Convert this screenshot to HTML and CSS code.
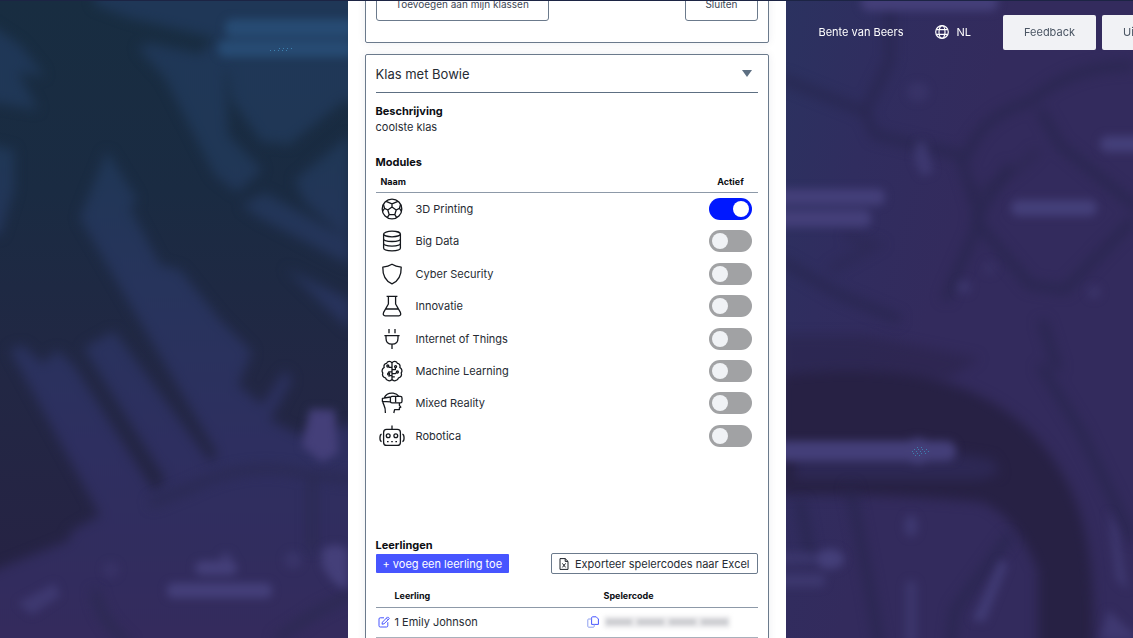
FILE: index.html
```html
<!DOCTYPE html>
<html lang="nl">
<head>
<meta charset="utf-8">
<meta name="viewport" content="width=device-width, initial-scale=1">
<title>Klassen</title>
<link rel="stylesheet" href="styles.css">
</head>
<body>
<svg class="backdrop" viewBox="0 0 1133 638" preserveAspectRatio="xMidYMid slice" aria-hidden="true">
  <defs>
    <linearGradient id="water" x1="0" y1="0" x2="0" y2="638" gradientUnits="userSpaceOnUse">
      <stop offset="0" stop-color="#182d41"/><stop offset=".3" stop-color="#1a2b42"/><stop offset=".6" stop-color="#222744"/><stop offset="1" stop-color="#272144"/>
    </linearGradient>
    <linearGradient id="land" x1="0" y1="0" x2="0" y2="638" gradientUnits="userSpaceOnUse">
      <stop offset="0" stop-color="#1f3757"/><stop offset=".25" stop-color="#203756"/><stop offset=".45" stop-color="#27345c"/><stop offset=".7" stop-color="#2e2f60"/><stop offset="1" stop-color="#342b5d"/>
    </linearGradient>
    <linearGradient id="east" x1="786" y1="0" x2="1000" y2="60" gradientUnits="userSpaceOnUse">
      <stop offset="0" stop-color="#2b3260"/><stop offset=".5" stop-color="#302d5f"/><stop offset="1" stop-color="#332b5d"/>
    </linearGradient>
    <filter id="b3" x="-30%" y="-60%" width="160%" height="220%" color-interpolation-filters="sRGB"><feGaussianBlur stdDeviation="4"/></filter>
    <filter id="b5" x="-20%" y="-20%" width="140%" height="140%" color-interpolation-filters="sRGB"><feGaussianBlur stdDeviation="6"/></filter>
  </defs>
  <rect width="567" height="638" fill="url(#water)"/>
  <rect x="567" width="566" height="638" fill="url(#east)"/>
  <g filter="url(#b5)" fill="url(#land)">
    <path d="M92-20H380V110L345 100L287 146L270 135L232 62L225 70L228 135L262 170L237 192L215 175L165 78L138 48L150 43L200 54L216 38L130 18L95 5Z"/>
    <path d="M225 58L350 58L350 80L286 143L262 142L232 100Z"/>
    <path d="M-20 18L20 45L45 76L18 72L38 110L-20 100Z"/>
    <path d="M-20 142L14 150L14 190L0 235L-20 235Z"/>
    <path d="M107 151L137 200L130 208L160 265L180 270L220 320L252 352L238 385L262 405L285 370L292 380L270 420L300 435L370 420V680H-30V580L70 540L70 532L100 515L10 350L22 345L43 364L57 350L74 366L154 492L166 480L84 348L114 331L210 462L218 455L80 218Z"/>
    <path d="M242 205L265 193L350 240V265L260 218Z"/>
    <path d="M295 180L350 135V240L305 202Z"/>
    <path d="M285 268L350 300V330Z"/>
  </g>
  <g filter="url(#b5)" fill="none" stroke="#29294f" stroke-width="8">
    <path d="M150 504L190 488Q250 458 308 475L360 480M312 480V550M95 590Q100 622 130 645M275 640L320 610L360 590" stroke-opacity=".8"/>
  </g>
  <g filter="url(#b3)" fill="#274b73">
    <rect x="225" y="19" width="130" height="18" rx="8"/><rect x="218" y="40" width="136" height="17" rx="8"/>
  </g>
  <g filter="url(#b3)" fill="#443f79">
    <path d="M310 409L335 410L338 453L322 462L302 446Z"/>
    <rect x="195" y="561" width="42" height="14" rx="7"/><rect x="167" y="583" width="105" height="15" rx="6"/>
    <path d="M322 550Q335 540 348 550V588Q335 590 322 565Z"/>
    <circle cx="226" cy="558" r="6" opacity=".6"/><circle cx="293" cy="560" r="9" opacity=".4"/><circle cx="111" cy="570" r="8" opacity=".3"/>
    <path d="M18 603L55 583L60 596L32 615Z" opacity=".65"/>
  </g>
  <g filter="url(#b5)" fill="#272144">
    <path d="M780 376Q860 365 925 378Q1015 395 1060 470Q1100 530 1092 660H1038V570Q1015 515 982 502Q880 493 780 495Z"/>
    <path d="M780 335L865 335L980 358L950 378L780 380Z" opacity=".45"/>
  </g>
  <path d="M795 448H920L992 459L1000 473L980 480H795Z" fill="#2d2854" filter="url(#b5)"/>
  <g filter="url(#b5)" fill="none" stroke="#27254b" stroke-width="9">
    <path d="M780 78L865 112L890 60V0M865 112L875 135L960 155L980 220L945 300M966 158Q980 115 1030 102Q1070 65 1133 66M1040 110L1060 145L1140 210M1010 165L975 220L1030 285L1065 290L1133 220M780 260L840 295L900 320M1040 365L1080 430L1133 540M850 485L870 590L880 650M1010 535L955 610L950 650M800 500L810 555M1042 320L1058 370" stroke-opacity=".7"/>
    <path d="M970 195Q1010 180 1038 150M845 235L875 245L830 270" stroke-opacity=".4"/>
  </g>
  <g filter="url(#b3)" fill="#443f79">
    <rect x="861" y="-6" width="137" height="17" rx="8"/>
    <rect x="775" y="189" width="110" height="16" rx="7"/><rect x="775" y="210" width="96" height="17" rx="7"/>
    <rect x="1011" y="200" width="86" height="16" rx="8"/><rect x="1100" y="136" width="60" height="16" rx="8"/>
    <rect x="775" y="441" width="181" height="20" rx="9"/><ellipse cx="918" cy="451" rx="14" ry="13"/>
    <ellipse cx="830" cy="559" rx="14" ry="10"/><rect x="775" y="552" width="40" height="12" rx="5" opacity=".5"/><rect x="775" y="574" width="50" height="13" rx="5" opacity=".6"/>
    <path d="M916 142L926 142L933 172L922 176L914 160Z" opacity=".65"/>
    <ellipse cx="918" cy="92" rx="11" ry="10" opacity=".35"/>
    <ellipse cx="911" cy="526" rx="7" ry="11" opacity=".65"/><rect x="905" y="580" width="12" height="65" rx="6" opacity=".5"/>
    <path d="M1000 560L1008 564L985 622L972 620Z" opacity=".8"/>
    <circle cx="964" cy="287" r="7" opacity=".5"/><circle cx="1094" cy="292" r="7" opacity=".4"/><circle cx="990" cy="268" r="7" opacity=".25"/>
    <path d="M1108 510L1118 530L1128 590L1116 580Z" opacity=".6"/><path d="M1108 610L1140 640H1100Z" opacity=".7"/>
  </g>
  <g fill="none" stroke="#3c80ae" stroke-width="1" stroke-dasharray="1 3">
    <path d="M917 447.500H924M914 449.500H929M912 451.500H930M913 453.500H927M915 455.500H922M279 48.500H294M270 50.500H288"/>
  </g>
</svg>

<div class="page">
  <main class="panel">
    <section class="card card-previous">
      <div class="actions">
        <button class="btn" type="button">Toevoegen aan mijn klassen</button>
        <button class="btn" type="button">Sluiten</button>
      </div>
    </section>

    <section class="card card-open">
      <button class="card-head" type="button" aria-expanded="true">
        <span>Klas met Bowie</span>
        <svg class="caret" viewBox="0 0 10 7" aria-hidden="true"><path d="M0 0H10L5 7Z"/></svg>
      </button>

      <h3 class="label">Beschrijving</h3>
      <p class="description">coolste klas</p>

      <h3 class="label">Modules</h3>
      <table class="modules">
        <colgroup><col class="col-icon"><col><col class="col-toggle"></colgroup>
        <thead><tr><th colspan="2" class="name-head">Naam</th><th class="toggle-cell">Actief</th></tr></thead>
        <tbody>
          <tr>
            <td><svg class="icon" viewBox="0 0 22 22" aria-hidden="true"><circle cx="11" cy="11" r="9.8"/><path d="M5 3.4L11 5.8L17 3.4M11 5.8V9M11 9L15.2 12L13.8 16.6H8.2L6.8 12ZM6.8 12L3.6 10.4L2.4 6.2M3.6 10.4L1.4 13.4M15.2 12L18.4 10.4L19.6 6.2M18.4 10.4L20.6 13.4M8.2 16.6L6.4 19.4M13.8 16.6L15.6 19.4"/></svg></td>
            <td><label for="m1">3D Printing</label></td>
            <td><input class="toggle" id="m1" type="checkbox" checked></td>
          </tr>
          <tr>
            <td><svg class="icon" viewBox="0 0 22 22" aria-hidden="true"><ellipse cx="11" cy="4" rx="8.4" ry="2.8"/><path d="M2.6 4V18C2.6 19.6 6.4 20.8 11 20.8S19.4 19.6 19.4 18V4M2.6 8.7C2.6 10.3 6.4 11.5 11 11.5S19.4 10.3 19.4 8.7M2.6 13.3C2.6 14.9 6.4 16.1 11 16.1S19.4 14.9 19.4 13.3"/></svg></td>
            <td><label for="m2">Big Data</label></td>
            <td><input class="toggle" id="m2" type="checkbox"></td>
          </tr>
          <tr>
            <td><svg class="icon" viewBox="0 0 22 22" aria-hidden="true"><path d="M11 1.2C8.2 3 5.2 3.8 1.8 4.2C1.6 11.6 4 17.8 11 20.8C18 17.8 20.4 11.6 20.2 4.2C16.8 3.8 13.8 3 11 1.2Z"/></svg></td>
            <td><label for="m3">Cyber Security</label></td>
            <td><input class="toggle" id="m3" type="checkbox"></td>
          </tr>
          <tr>
            <td><svg class="icon" viewBox="0 0 22 22" aria-hidden="true"><path d="M5.6 1.4H16.4M7.4 1.4V9L2.6 17.4C1.8 19.4 2.4 20.8 4.2 20.8H17.8C19.6 20.8 20.2 19.4 19.4 17.4L14.6 9V1.4M4.6 14H17.4"/></svg></td>
            <td><label for="m4">Innovatie</label></td>
            <td><input class="toggle" id="m4" type="checkbox"></td>
          </tr>
          <tr>
            <td><svg class="icon" viewBox="0 0 22 22" aria-hidden="true"><path d="M8 1V5.2M14 1V5.2M3.4 7.6H18.6M5 7.6V10.2C5 14 7.4 16.2 11 16.2S17 14 17 10.2V7.6M11 16.2V21"/></svg></td>
            <td><label for="m5">Internet of Things</label></td>
            <td><input class="toggle" id="m5" type="checkbox"></td>
          </tr>
          <tr>
            <td><svg class="icon" viewBox="0 0 22 22" aria-hidden="true"><path d="M11 3C9.8.8 6.2.8 5.6 3.4C3.4 3.6 2.4 5.8 3.2 7.4C.8 8.8.6 11.6 1.8 13C.8 15.4 2.2 17.4 4.4 17.8C5.4 21.2 9.6 21.6 11 19.4C12.4 21.6 16.6 21.2 17.6 17.8C19.8 17.4 21.2 15.4 20.2 13C21.4 11.6 21.2 8.8 18.8 7.4C19.6 5.8 18.6 3.6 16.4 3.4C15.8.8 12.2.8 11 3ZM11 3V19.4M11 7.4H8.4L7.4 6.4M11 11.8H7.8V13.2M11 15.6H8.6L7.6 16.6M11 9.6H14.4V7.6M11 13.6H14.4L15.6 12.4M11 16.8H13.8"/><circle cx="6.8" cy="6" r="1"/><circle cx="7.6" cy="14" r="1"/><circle cx="14.6" cy="6.6" r="1"/><circle cx="16.4" cy="12" r="1"/></svg></td>
            <td><label for="m6">Machine Learning</label></td>
            <td><input class="toggle" id="m6" type="checkbox"></td>
          </tr>
          <tr>
            <td><svg class="icon" viewBox="0 0 22 22" aria-hidden="true"><rect x="9.4" y="4.4" width="11.6" height="6.4" rx="1.6"/><path d="M14.6 4.6V10.6M9.4 5L1.4 6.4V9.4L9.4 9.8M3.2 5.8C5.2 1.8 9 .8 12.2 1.2C15 1.6 16.8 2.8 17.8 4.4M1.8 9.6C2 12.8 4.8 13.6 4.4 21M18.4 11V13.4L19.8 15.2L18.4 15.8V17.6H13.6L12.8 21"/></svg></td>
            <td><label for="m7">Mixed Reality</label></td>
            <td><input class="toggle" id="m7" type="checkbox"></td>
          </tr>
          <tr>
            <td><svg class="icon icon-robot" viewBox="0 0 26 22" aria-hidden="true"><rect x="4.6" y="4.4" width="16.8" height="16" rx="3"/><path d="M13 4.4V.6M2.6 9.2C.4 9.8.4 16 2.6 16.6M23.4 9.2C25.6 9.8 25.6 16 23.4 16.6M8 16.6H9.6M12.2 16.6H13.8M16.4 16.6H18"/><circle cx="9.2" cy="10.8" r="1.9"/><circle cx="16.8" cy="10.8" r="1.9"/></svg></td>
            <td><label for="m8">Robotica</label></td>
            <td><input class="toggle" id="m8" type="checkbox"></td>
          </tr>
        </tbody>
      </table>

      <h3 class="label">Leerlingen</h3>
      <div class="toolbar">
        <button class="btn-add" type="button">+ voeg een leerling toe</button>
        <button class="btn-export" type="button">
          <svg class="file" viewBox="0 0 10 12" aria-hidden="true"><path d="M1 .6H6.2L9 3.4V11.4H1ZM6.2 .6V3.4H9M3.4 5.4L6.6 9.4M6.6 5.4L3.4 9.4"/></svg>
          Exporteer spelercodes naar Excel
        </button>
      </div>
      <table class="students">
        <colgroup><col class="col-action"><col class="col-student"><col class="col-action"><col></colgroup>
        <thead><tr><th></th><th>Leerling</th><th></th><th>Spelercode</th></tr></thead>
        <tbody><tr>
          <td><button class="icon-btn" type="button" aria-label="Bewerken"><svg viewBox="0 0 12 12" aria-hidden="true"><path d="M6 1.8H2.2Q1 1.8 1 3V9.8Q1 11 2.2 11H8.6Q9.8 11 9.8 9.8V6.2M4 8.2L4.4 6.2L9.6 .9L11.3 2.6L6 7.8ZM8.4 2.2L10 3.8"/></svg></button></td>
          <td>1 Emily Johnson</td>
          <td><button class="icon-btn" type="button" aria-label="Kopiëren"><svg viewBox="0 0 12 12" aria-hidden="true"><path d="M5.6 .8H9.2L11.4 3V8.4H4.6V1.8Q4.6 .8 5.6 .8Z"/><path class="faint" d="M4.6 3H1.6Q.8 3 .8 3.8V10.4Q.8 11.2 1.6 11.2H6.4Q7.2 11.2 7.2 10.4V8.4"/></svg></button></td>
          <td><div class="code"><span></span><span></span><span></span><span></span></div></td>
        </tr></tbody>
      </table>
    </section>
  </main>

  <header class="topbar">
    <span class="user">Bente van Beers</span>
    <button class="language" type="button">
      <svg class="globe" viewBox="0 0 14 14" aria-hidden="true"><circle cx="7" cy="7" r="6.3"/><ellipse cx="7" cy="7" rx="3" ry="6.3"/><path d="M1.4 4.6H12.6M1.4 9.4H12.6"/></svg>
      NL
    </button>
    <button class="top-btn" type="button">Feedback</button>
    <button class="top-btn" type="button">Uitloggen</button>
  </header>
</div>
</body>
</html>
```
FILE: styles.css
```css
* {
  box-sizing: border-box;
}

body {
  margin: 0;
  height: 100vh;
  overflow: hidden;
  background: #272144;
  color: #262b33;
  font: 11px/16px Inter, "Liberation Sans", sans-serif;
}

button {
  font: inherit;
  color: inherit;
  cursor: pointer;
}

.backdrop {
  position: fixed;
  inset: 0;
  width: 100%;
  height: 100%;
}

.page {
  position: relative;
  display: grid;
  grid-template-columns: 1fr 438px 1fr;
  height: 100%;
  border-top: 1px solid #1c2444;
}

.panel {
  grid-column: 2;
  display: flex;
  flex-direction: column;
  gap: 11px;
  padding: 0 17px;
  overflow: hidden;
  background: #fff;
}

.card {
  flex: none;
  padding: 0 10px;
  border: 1px solid #6b7a8c;
  border-radius: 2px;
  box-shadow: 0 0 8px rgba(30, 40, 80, 0.08);
}

/* The list is scrolled: only the foot of this card is in view. */
.card-previous {
  margin-top: -35px;
  padding-top: 20px;
  padding-bottom: 21px;
}

.card-open {
  min-height: 640px;
}

.actions,
.toolbar {
  display: flex;
  justify-content: space-between;
  align-items: center;
}

.btn {
  height: 34px;
  padding: 0 19px;
  border: 1px solid #6b7a8c;
  border-radius: 3px;
  background: #fff;
  color: #3d4756;
  font-size: 10px;
}

.card-head {
  display: flex;
  align-items: center;
  justify-content: space-between;
  width: 100%;
  height: 38px;
  margin-bottom: 10px;
  padding: 0 6px 0 0;
  border: 0;
  border-bottom: 1px solid #5d6f82;
  background: none;
  font-size: 13px;
}

.caret {
  width: 10px;
  height: 7px;
  fill: #5d6f82;
}

.label {
  margin: 0;
  font-size: 11px;
  font-weight: 700;
  color: #0b0d12;
}

.description {
  margin: 0 0 19px;
}

table {
  width: 100%;
  border-collapse: collapse;
  table-layout: fixed;
}

th,
td {
  padding: 0;
  text-align: left;
  vertical-align: middle;
}

th {
  font-size: 9px;
  font-weight: 700;
  color: #0b0d12;
}

thead tr {
  height: 22px;
  border-bottom: 1px solid #8d99a8;
}

.modules {
  height: 282px;
  margin-bottom: 85px;
}

.modules th {
  padding-top: 2px;
}

.modules .name-head {
  padding-left: 5px;
}

.modules .toggle-cell {
  text-align: center;
}

.col-icon {
  width: 32px;
}

.col-toggle {
  width: 54px;
}

.modules label {
  padding-left: 8px;
}

.icon {
  display: block;
  width: 22px;
  height: 22px;
  margin: 0 auto;
  overflow: visible;
  fill: none;
  stroke: #14171c;
  stroke-width: 1.3;
  stroke-linejoin: round;
}

.icon-robot {
  width: 26px;
}

.toggle {
  appearance: none;
  display: block;
  width: 43px;
  height: 22px;
  margin: 0 auto;
  padding: 3px;
  border-radius: 11px;
  background: #a1a2a4;
}

.toggle::before {
  content: "";
  display: block;
  width: 16px;
  height: 16px;
  border-radius: 50%;
  background: #f0f2f5;
}

.toggle:checked {
  background: #0018ff;
}

.toggle:checked::before {
  margin-left: auto;
  background: #fff;
}

.btn-add {
  height: 19px;
  padding: 0 7px;
  border: 0;
  border-radius: 1px;
  background: #4755ff;
  color: #fff;
}

.btn-export {
  display: flex;
  align-items: center;
  gap: 6px;
  height: 21px;
  padding: 0 7px;
  border: 1px solid #6b7a8c;
  border-radius: 2px;
  background: #fff;
}

.file {
  width: 10px;
  height: 12px;
  fill: none;
  stroke: #1d2229;
}

.students thead tr {
  height: 33px;
}

.students thead th {
  padding-top: 11px;
}

.students tbody tr {
  height: 30px;
  border-bottom: 1px solid #a8b0bb;
}

.col-action {
  width: 19px;
}

.col-student {
  width: 190px;
}

.icon-btn {
  display: block;
  width: 16px;
  padding: 0 2px;
  border: 0;
  background: none;
}

.icon-btn svg {
  display: block;
  width: 12px;
  height: 12px;
  fill: none;
  stroke: #4755ff;
}

.icon-btn .faint {
  stroke: #8fa0f0;
}

.code {
  display: flex;
  gap: 5px;
  width: 126px;
  height: 12px;
  padding: 3px 2px;
  background: #ececee;
  filter: blur(2px);
}

.code span {
  flex: 1;
  background: #cbccd0;
}

.topbar {
  grid-column: 3;
  display: flex;
  align-items: center;
  align-self: start;
  height: 62px;
  padding-left: 33px;
  overflow: hidden;
  white-space: nowrap;
  color: #fff;
}

.language {
  display: flex;
  align-items: center;
  gap: 7px;
  margin: 0 32px;
  padding: 0;
  border: 0;
  background: none;
}

.globe {
  width: 14px;
  height: 14px;
  fill: none;
  stroke: #fff;
  stroke-width: 1.2;
}

.top-btn {
  flex: none;
  height: 35px;
  margin-right: 6px;
  padding: 0 21px;
  border: 0;
  border-radius: 2px;
  background: #f1f2f5;
  color: #4a5563;
}
```
